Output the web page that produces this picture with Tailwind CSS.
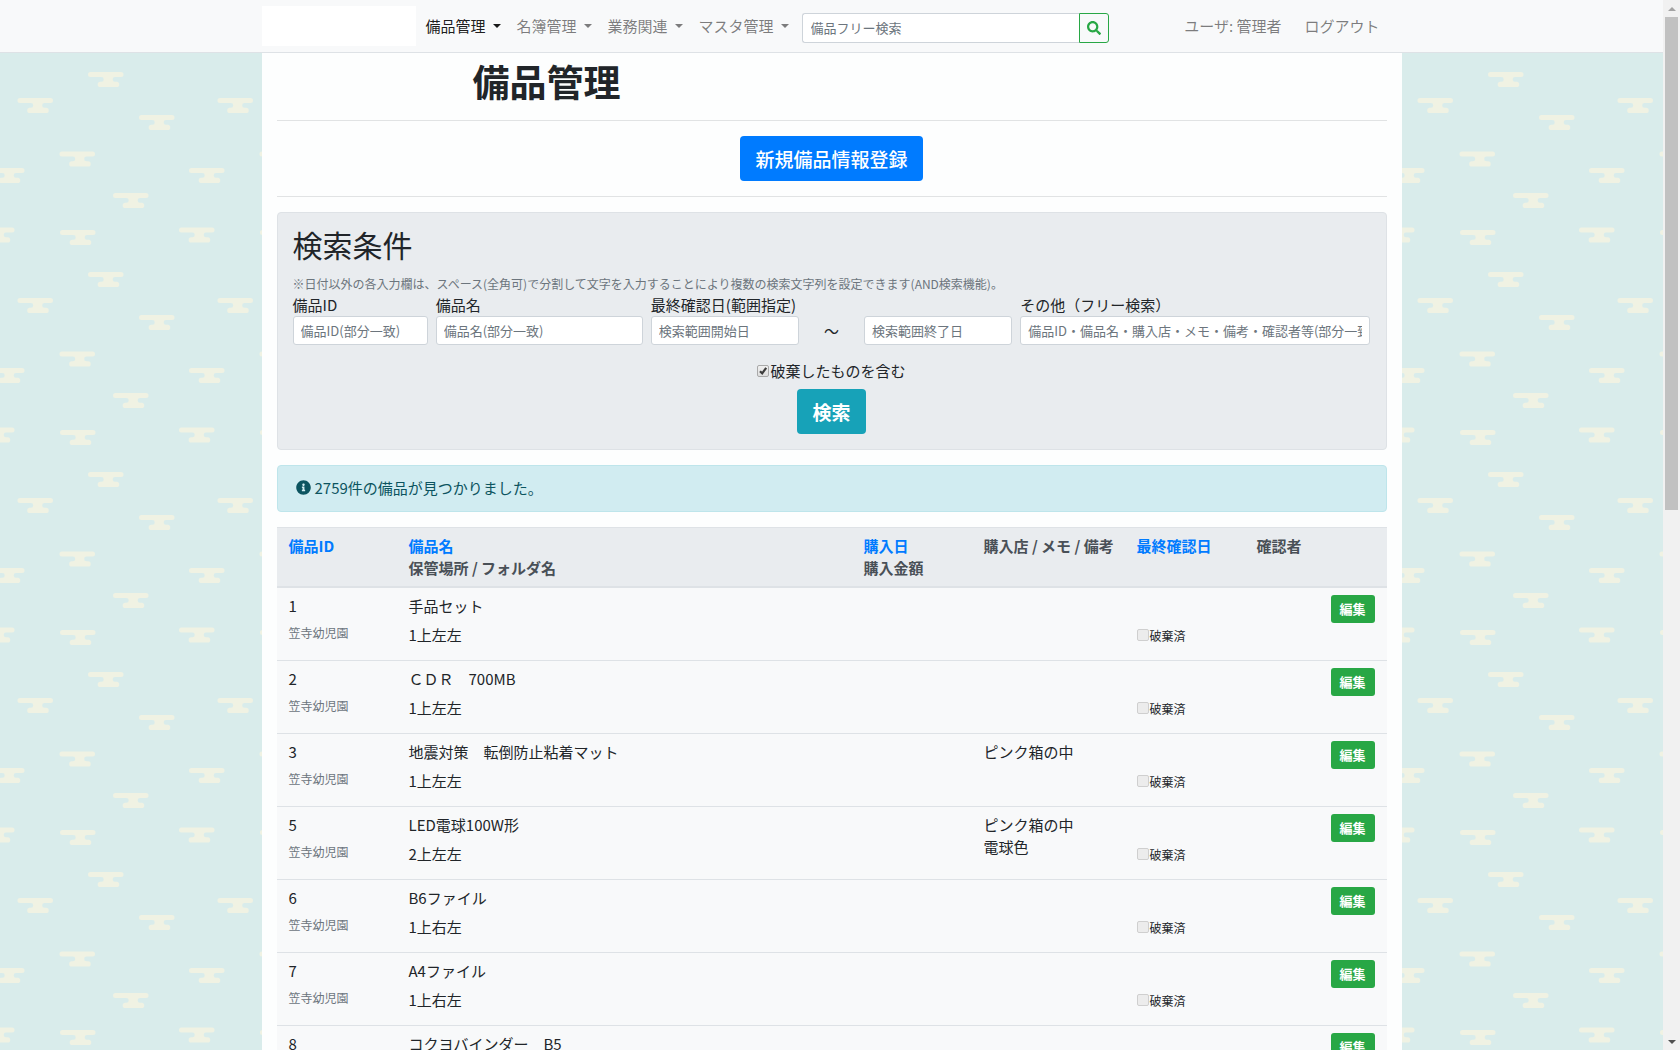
<!DOCTYPE html>
<html lang="ja">
<head>
<meta charset="utf-8">
<title>備品管理</title>
<script src="https://cdn.jsdelivr.net/npm/@tailwindcss/browser@4"></script>
</head>
<body class="flex h-screen overflow-hidden font-['Noto_Sans_CJK_JP',sans-serif] text-[15px] leading-[22px] text-[#212529]">

<div class="relative flex min-w-0 flex-1 flex-col overflow-hidden bg-[#d9eceb]">
  <!-- cloud pattern -->
  <svg class="absolute inset-0 h-full w-full" aria-hidden="true">
    <defs>
      <path id="cloud" fill="#f0f2e3" d="M2.500 0H33a2.500 2.500 0 0 1 0 5H27a2.300 2.300 0 0 0-2.300 2.400A2.300 2.300 0 0 0 27 9.800h1.600a2.600 2.600 0 0 1 0 5.200H12.300a2.600 2.600 0 0 1 0-5.200H13.400a2.300 2.300 0 0 0 2.300-2.400A2.300 2.300 0 0 0 13.400 5H2.500a2.500 2.500 0 0 1 0-5z"/>
      <pattern id="clouds" width="200" height="200" patternUnits="userSpaceOnUse">
        <use href="#cloud" x="88" y="72"/>
        <use href="#cloud" x="17.500" y="98"/>
        <use href="#cloud" x="139" y="115"/>
        <use href="#cloud" x="59.500" y="151.500"/>
        <use href="#cloud" x="189" y="168"/>
        <use href="#cloud" x="-11" y="168"/>
        <use href="#cloud" x="113" y="193"/>
        <use href="#cloud" x="113" y="-7"/>
        <use href="#cloud" x="60" y="30"/>
        <use href="#cloud" x="179" y="27.500"/>
        <use href="#cloud" x="-21" y="27.500"/>
      </pattern>
    </defs>
    <rect width="100%" height="100%" fill="url(#clouds)"/>
  </svg>

  <header class="relative shrink-0 border-b border-[#dee2e6] bg-[#f8f9fa]">
    <nav class="mx-auto flex h-[52px] w-full max-w-[1140px] items-center">
      <a href="#" aria-label="ホーム" class="h-10 w-[154px] shrink-0 bg-white"></a>
      <ul class="ml-[10px] flex shrink-0 gap-4 text-black/50">
        <li><a href="#" class="flex items-center gap-[7px] text-black/90">備品管理<span class="border-x-[4px] border-t-[4px] border-x-transparent border-t-current"></span></a></li>
        <li><a href="#" class="flex items-center gap-[7px]">名簿管理<span class="border-x-[4px] border-t-[4px] border-x-transparent border-t-current"></span></a></li>
        <li><a href="#" class="flex items-center gap-[7px]">業務関連<span class="border-x-[4px] border-t-[4px] border-x-transparent border-t-current"></span></a></li>
        <li><a href="#" class="flex items-center gap-[7px]">マスタ管理<span class="border-x-[4px] border-t-[4px] border-x-transparent border-t-current"></span></a></li>
      </ul>
      <form class="mt-1 ml-[13px] flex h-[30px] w-[307px]">
        <input type="text" aria-label="備品フリー検索" placeholder="備品フリー検索" class="min-w-0 flex-1 rounded-l-[3px] border border-r-0 border-[#ced4da] bg-white px-2 text-[13px] placeholder:text-[#6c757d]">
        <button type="button" aria-label="検索" class="flex w-[30px] items-center justify-center rounded-r-[3px] border border-[#28a745] text-[#28a745]">
          <svg class="h-[14px] w-[14px]" viewBox="0 0 512 512" fill="currentColor"><path d="M505 442.700L405.300 343c-4.500-4.500-10.600-7-17-7H372c27.600-35.300 44-79.700 44-128C416 93.100 322.900 0 208 0S0 93.100 0 208s93.100 208 208 208c48.300 0 92.700-16.400 128-44v16.300c0 6.400 2.500 12.500 7 17l99.700 99.700c9.400 9.400 24.600 9.400 33.900 0l28.300-28.300c9.400-9.400 9.400-24.600.1-34zM208 336c-70.700 0-128-57.200-128-128 0-70.700 57.200-128 128-128 70.700 0 128 57.200 128 128 0 70.700-57.200 128-128 128z"/></svg>
        </button>
      </form>
      <div class="mr-[22px] ml-auto flex shrink-0 gap-[23px] text-black/50">
        <span>ユーザ: 管理者</span>
        <a href="#">ログアウト</a>
      </div>
    </nav>
  </header>

  <main class="relative mx-auto w-full max-w-[1140px] flex-1 bg-[#fdfefe] px-[15px]">
    <h1 class="ml-[196px] pt-[6px] pb-4 text-[37px] leading-[45px] font-bold">備品管理</h1>
    <div class="flex justify-center border-y border-[#e1e3e4] py-[15px]">
      <button type="button" class="h-[45px] rounded-[4px] bg-[#007bff] px-[15px] text-[19px] font-medium text-white">新規備品情報登録</button>
    </div>

    <form class="mt-[15px] rounded-[4px] border border-[#dee2e6] bg-[#e9ecef] p-[15px]">
      <h2 class="text-[30px] leading-[33px]">検索条件</h2>
      <p class="mt-3 text-[12px] leading-[21px] text-[#6c757d]">※日付以外の各入力欄は、スペース(全角可)で分割して文字を入力することにより複数の検索文字列を設定できます(AND検索機能)。</p>
      <div class="grid grid-cols-[135fr_207fr_148fr_49fr_148fr_350fr] gap-x-2">
        <label for="f-id">備品ID</label>
        <label for="f-name">備品名</label>
        <label for="f-from" class="whitespace-nowrap">最終確認日(範囲指定)</label>
        <span></span>
        <span></span>
        <label for="f-free">その他（フリー検索）</label>
        <input id="f-id" type="text" placeholder="備品ID(部分一致)" class="h-[29px] w-full min-w-0 rounded-[3px] border border-[#ced4da] bg-white px-[7px] text-[13px] placeholder:text-[#6c757d]">
        <input id="f-name" type="text" placeholder="備品名(部分一致)" class="h-[29px] w-full min-w-0 rounded-[3px] border border-[#ced4da] bg-white px-[7px] text-[13px] placeholder:text-[#6c757d]">
        <input id="f-from" type="text" placeholder="検索範囲開始日" class="h-[29px] w-full min-w-0 rounded-[3px] border border-[#ced4da] bg-white px-[7px] text-[13px] placeholder:text-[#6c757d]">
        <span class="self-center text-center">～</span>
        <input type="text" aria-label="検索範囲終了日" placeholder="検索範囲終了日" class="h-[29px] w-full min-w-0 rounded-[3px] border border-[#ced4da] bg-white px-[7px] text-[13px] placeholder:text-[#6c757d]">
        <input id="f-free" type="text" placeholder="備品ID・備品名・購入店・メモ・備考・確認者等(部分一致)" class="h-[29px] w-full min-w-0 rounded-[3px] border border-[#ced4da] bg-white px-[7px] text-[13px] placeholder:text-[#6c757d]">
      </div>
      <div class="mt-[15px] flex justify-center">
        <label class="flex items-center gap-px">
          <span class="relative flex pb-px">
            <input type="checkbox" checked class="h-3 w-3 appearance-none rounded-[2px] border border-[#a9a9a9] bg-linear-to-b from-[#f0f0f0] to-[#dedede]">
            <svg class="pointer-events-none absolute top-0 left-0 h-3 w-3" viewBox="0 0 12 12" fill="none" stroke="#3c3c3c" stroke-width="2.200"><path d="M3 6.200L5.200 8.400L9.200 2.800"/></svg>
          </span>
          破棄したものを含む
        </label>
      </div>
      <div class="mt-[7px] flex justify-center">
        <button type="button" class="h-[45px] rounded-[4px] bg-[#17a2b8] px-[15px] text-[19px] font-bold text-white">検索</button>
      </div>
    </form>

    <div role="status" class="mt-[15px] flex h-[47px] items-center gap-1 rounded-[4px] border border-[#bee5eb] bg-[#d1ecf1] px-[18px] pb-[2px] text-[#0c5460]">
      <svg class="h-[15px] w-[15px]" viewBox="0 0 512 512" fill="currentColor"><path d="M256 8C119 8 8 119.100 8 256c0 137 111 248 248 248s248-111 248-248C504 119.100 393 8 256 8zm0 110c23.200 0 42 18.800 42 42s-18.800 42-42 42-42-18.800-42-42 18.800-42 42-42zm56 254c0 6.600-5.400 12-12 12h-88c-6.600 0-12-5.400-12-12v-24c0-6.600 5.400-12 12-12h12v-64h-12c-6.600 0-12-5.400-12-12v-24c0-6.600 5.400-12 12-12h64c6.600 0 12 5.400 12 12v100h12c6.600 0 12 5.400 12 12v24z"/></svg>
      2759件の備品が見つかりました。
    </div>

    <table class="mt-[15px] w-full table-fixed border-separate border-spacing-0 text-left">
      <colgroup>
        <col class="w-[120px]"><col><col class="w-[120px]"><col class="w-[153px]"><col class="w-[120px]"><col class="w-[74px]"><col class="w-[68px]">
      </colgroup>
      <thead class="bg-[#e9ecef] align-top text-[#495057]">
        <tr>
          <th class="border-t border-b-2 border-[#dee2e6] px-3 py-[7px]"><a href="#" class="text-[#007bff]">備品ID</a></th>
          <th class="border-t border-b-2 border-[#dee2e6] px-3 py-[7px]"><a href="#" class="text-[#007bff]">備品名</a><br>保管場所 / フォルダ名</th>
          <th class="border-t border-b-2 border-[#dee2e6] px-3 py-[7px]"><a href="#" class="text-[#007bff]">購入日</a><br>購入金額</th>
          <th class="border-t border-b-2 border-[#dee2e6] px-3 py-[7px] whitespace-nowrap">購入店 / メモ / 備考</th>
          <th class="border-t border-b-2 border-[#dee2e6] px-3 py-[7px]"><a href="#" class="text-[#007bff]">最終確認日</a></th>
          <th class="border-t border-b-2 border-[#dee2e6] px-3 py-[7px]">確認者</th>
          <th class="border-t border-b-2 border-[#dee2e6] px-3 py-[7px]"></th>
        </tr>
      </thead>
      <tbody id="rows" class="bg-[#f8f9fa] align-top"></tbody>
    </table>
  </main>
</div>

<!-- scroll bar -->
<div class="flex w-[17px] shrink-0 flex-col items-center bg-[#f1f1f1]" aria-hidden="true">
  <div class="flex h-[17px] items-center"><span class="border-x-[4px] border-b-[4px] border-x-transparent border-b-[#a3a3a3]"></span></div>
  <div class="h-[493px] w-[13px] bg-[#c1c1c1]"></div>
  <div class="mt-auto flex h-[17px] items-center"><span class="border-x-[4px] border-t-[4px] border-x-transparent border-t-[#505050]"></span></div>
</div>

<script>
  const items = [
    [1, '手品セット', '1上左左', ''],
    [2, 'ＣＤＲ　700MB', '1上左左', ''],
    [3, '地震対策　転倒防止粘着マット', '1上左左', 'ピンク箱の中'],
    [5, 'LED電球100W形', '2上左左', 'ピンク箱の中<br>電球色'],
    [6, 'B6ファイル', '1上右左', ''],
    [7, 'A4ファイル', '1上右左', ''],
    [8, 'コクヨバインダー　B5', '1上右左', ''],
  ];
  const cell = 'h-[73px] border-b border-[#dee2e6] px-3 py-[7px]';
  document.getElementById('rows').innerHTML = items.map(([id, name, place, memo]) => `
    <tr>
      <td class="${cell}">${id}<div class="mt-[5px] text-[12px] text-[#6c757d]">笠寺幼児園</div></td>
      <td class="${cell}">${name}<div class="mt-[7px]">${place}</div></td>
      <td class="${cell}"></td>
      <td class="${cell}">${memo}</td>
      <td class="${cell}"><label class="mt-[30px] flex items-center gap-px text-[12px]"><input type="checkbox" disabled class="mb-[3px] h-3 w-3 appearance-none rounded-[2px] border border-[#cfcfcf] bg-[#ececec]">破棄済</label></td>
      <td class="${cell}"></td>
      <td class="${cell}"><button type="button" class="h-7 w-11 rounded-[3px] bg-[#28a745] text-[13px] font-bold text-white">編集</button></td>
    </tr>`).join('');
</script>
</body>
</html>
